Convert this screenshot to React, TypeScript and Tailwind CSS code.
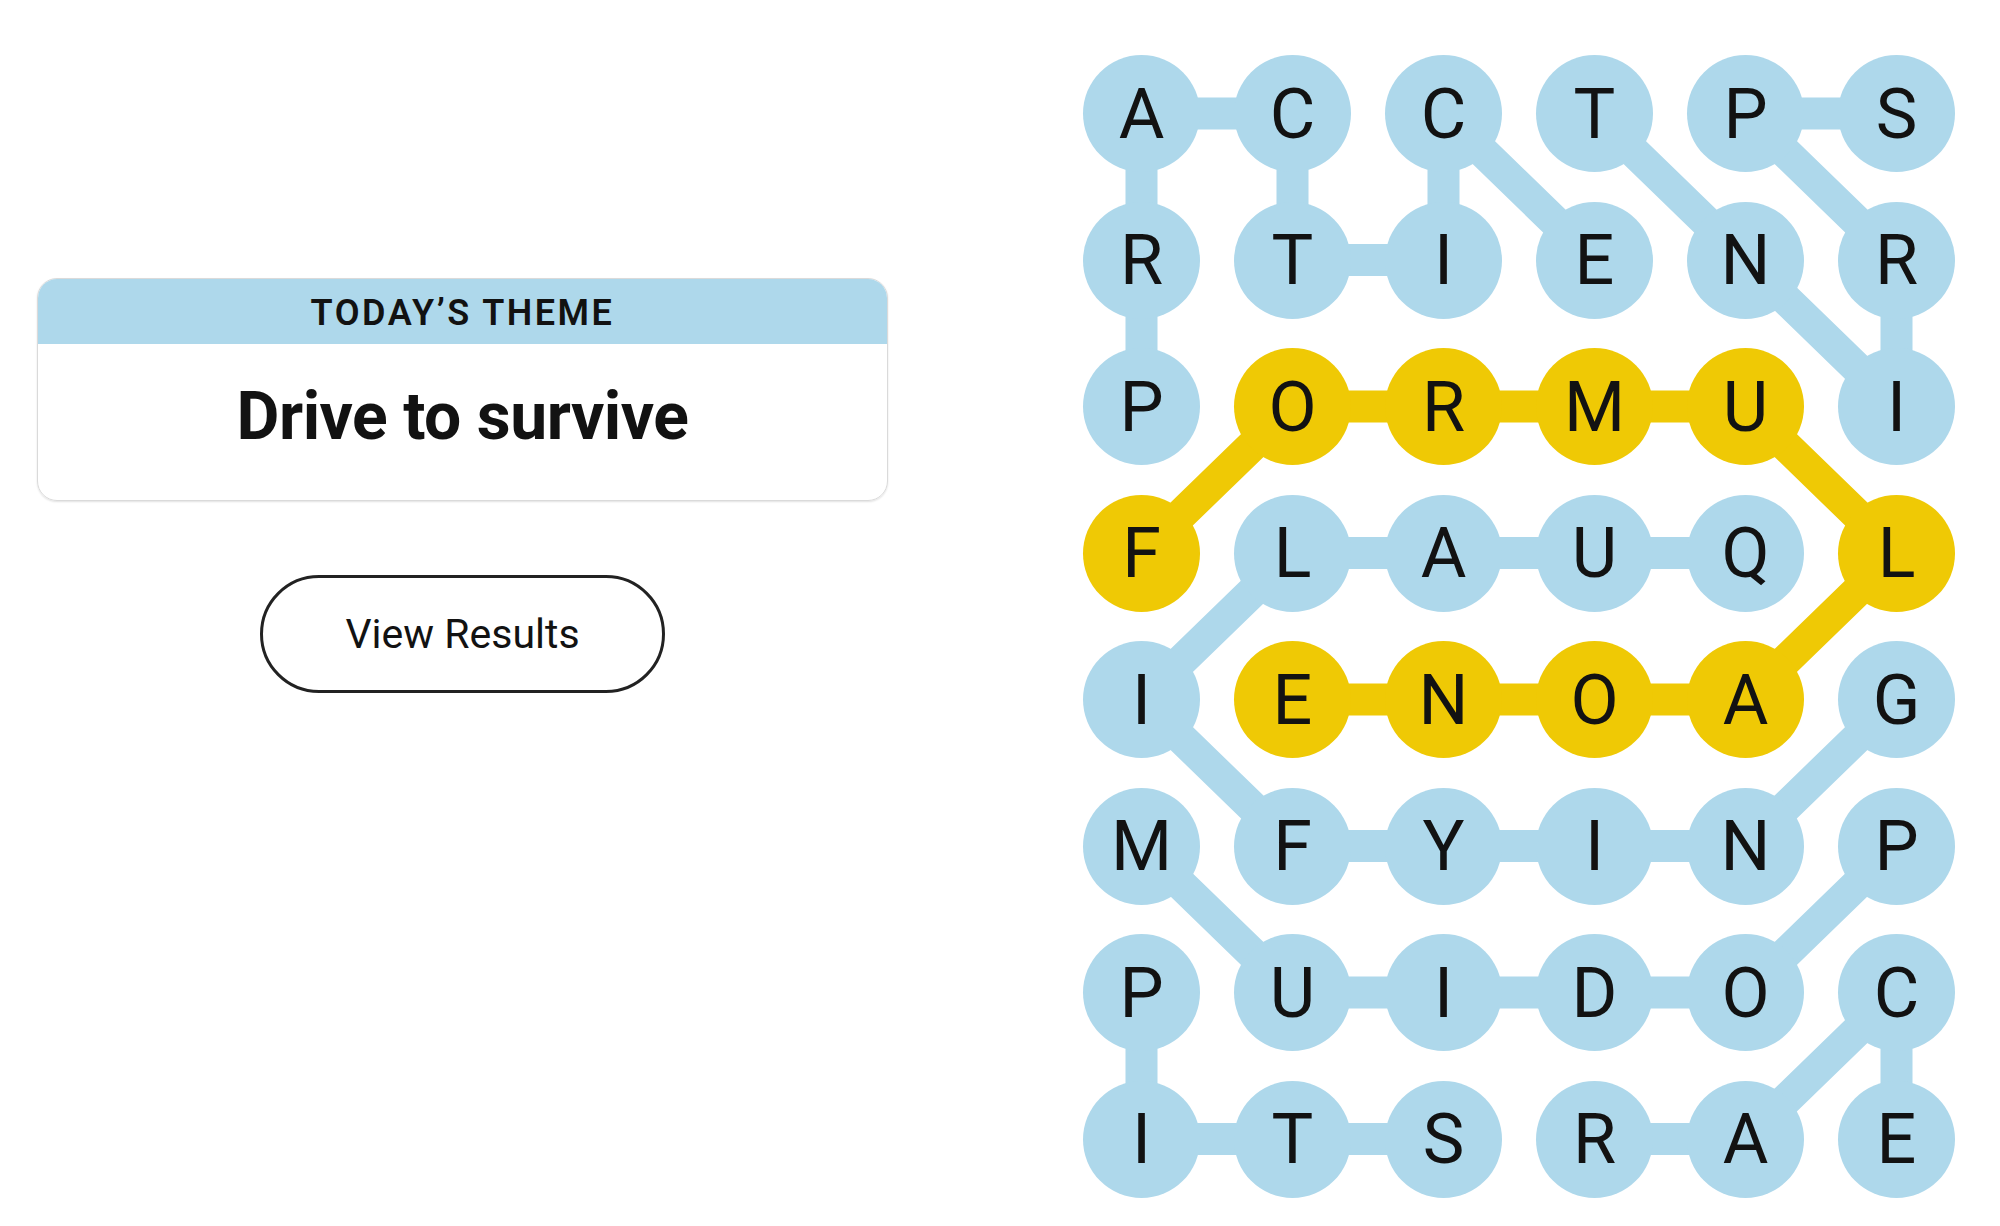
import React from "react";

const GRID = ["ACCTPS", "RTIENR", "PORMUI", "FLAUQL", "IENOAG", "MFYINP", "PUIDOC", "ITSRAE"];

const SPANGRAM: [number, number][] = [
  [3, 0], [2, 1], [2, 2], [2, 3], [2, 4], [3, 5], [4, 4], [4, 3], [4, 2], [4, 1],
];

const WORDS: [number, number][][] = [
  [[2, 0], [1, 0], [0, 0], [0, 1], [1, 1], [1, 2], [0, 2], [1, 3]],
  [[0, 5], [0, 4], [1, 5], [2, 5], [1, 4], [0, 3]],
  [[3, 4], [3, 3], [3, 2], [3, 1], [4, 0], [5, 1], [5, 2], [5, 3], [5, 4], [4, 5]],
  [[5, 5], [6, 4], [6, 3], [6, 2], [6, 1], [5, 0]],
  [[6, 0], [7, 0], [7, 1], [7, 2]],
  [[7, 3], [7, 4], [6, 5], [7, 5]],
];

const D = 117;
const CX = 151;
const CY = 146.5;
const BLUE = "#aed8eb";
const YELLOW = "#efc905";

const pt = ([r, c]: [number, number]) => `${D / 2 + c * CX},${D / 2 + r * CY}`;

const isYellow = (r: number, c: number) => SPANGRAM.some(([a, b]) => a === r && b === c);

function Board() {
  const w = 5 * CX + D;
  const h = 7 * CY + D;
  return (
    <div className="relative w-[872px] h-[1142.5px]">
      <svg className="absolute inset-0" width={w} height={h} viewBox={`0 0 ${w} ${h}`}>
        {WORDS.map((path, i) => (
          <polyline
            key={i}
            points={path.map(pt).join(" ")}
            fill="none"
            stroke={BLUE}
            strokeWidth={32}
            strokeLinejoin="round"
          />
        ))}
        <polyline
          points={SPANGRAM.map(pt).join(" ")}
          fill="none"
          stroke={YELLOW}
          strokeWidth={32}
          strokeLinejoin="round"
        />
      </svg>
      <div className="relative grid grid-cols-[repeat(6,117px)] gap-x-[34px] gap-y-[29.5px]">
        {GRID.flatMap((row, r) =>
          row.split("").map((ch, c) => (
            <div
              key={`${r}-${c}`}
              className={`w-[117px] h-[117px] rounded-full flex items-center justify-center text-[70px] leading-none text-[#121212] ${
                isYellow(r, c) ? "bg-[#efc905]" : "bg-[#aed8eb]"
              }`}
              style={{ fontFamily: "Roboto, 'Liberation Sans', sans-serif" }}
            >
              {ch}
            </div>
          ))
        )}
      </div>
    </div>
  );
}

export default function App() {
  return (
    <div
      className="w-full h-[1226px] bg-white flex pl-[37px] overflow-hidden"
      style={{ fontFamily: "Roboto, 'Liberation Sans', sans-serif" }}
    >
      <div className="w-[851px] pt-[278px] flex flex-col items-center shrink-0">
        <div className="w-full rounded-[20px] border-[1.5px] border-[#dadada] overflow-hidden shadow-[0_1px_2px_rgba(0,0,0,0.12)]">
          <div className="h-[65px] bg-[#aed8eb] flex items-center justify-center">
            <span className="text-[36px] font-semibold tracking-[2.5px] text-[#121212] leading-none pt-[3px]">
              TODAY’S THEME
            </span>
          </div>
          <div className="h-[156px] flex items-center justify-center pb-[10px]">
            <span className="text-[66px] font-bold tracking-[-0.5px] text-[#121212] leading-none">
              Drive to survive
            </span>
          </div>
        </div>
        <button className="mt-[74px] w-[405px] h-[118px] rounded-full border-[3px] border-[#222222] bg-white flex items-center justify-center">
          <span className="text-[41px] text-[#121212] leading-none">View Results</span>
        </button>
      </div>
      <div className="ml-[195px] mt-[55px] shrink-0">
        <Board />
      </div>
    </div>
  );
}
